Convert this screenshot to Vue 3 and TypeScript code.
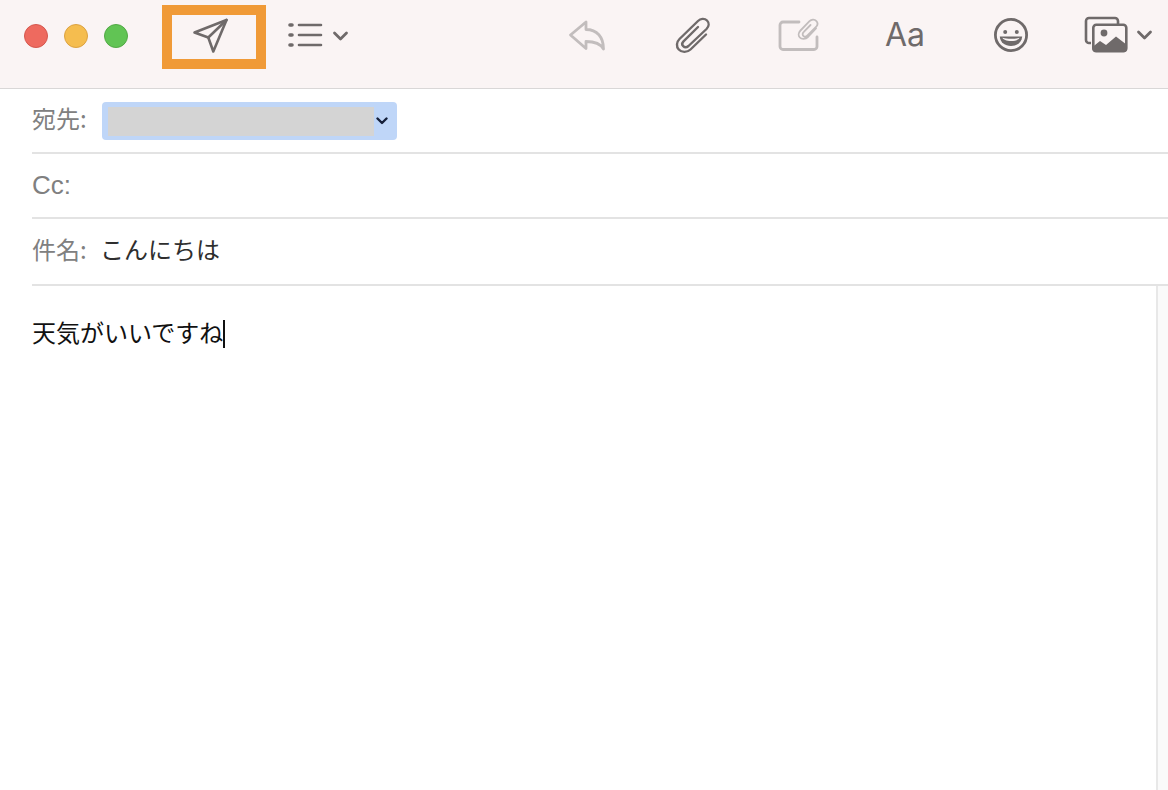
<script setup lang="ts">
const subject: string = 'こんにちは'
const body: string = '天気がいいですね'
</script>

<template>
  <div class="window">
    <header class="toolbar">
      <div class="lights">
        <span class="light red"></span>
        <span class="light yellow"></span>
        <span class="light green"></span>
      </div>
      <div class="send">
        <svg class="send-icon" width="40" height="40" viewBox="4 0 40 40" fill="none" stroke="#6f6a6a" stroke-width="2.6" stroke-linejoin="round" stroke-linecap="round">
          <path d="M36.5 3 L4.5 15.5 L18.3 20.5 L23.3 34.5 Z" />
          <path d="M36.5 3 L18.3 20.5" />
        </svg>
      </div>
      <div class="list">
        <svg width="62" height="30" viewBox="0 0 62 30" fill="none" stroke="#6f6a6a" stroke-linecap="round">
          <path d="M2 5 H4 M2 15 H4 M2 25 H4" stroke-width="3.6" />
          <path d="M11 5 H33 M11 15 H33 M11 25 H33" stroke-width="2.6" />
          <path d="M46.5 13 L52.5 19 L58.5 13" stroke-width="2.8" stroke-linejoin="round" />
        </svg>
      </div>
      <div class="tools">
        <div class="tool">
          <svg width="38" height="32" viewBox="0 0 38 32" fill="none" stroke="#c2bdbd" stroke-width="2.8" stroke-linejoin="round" stroke-linecap="round">
            <path d="M2.5 16 L18 3 V10.5 C29 10.5 35.5 18 35.5 30 C32.5 24.5 27 22.5 18 22.5 V29.5 Z" />
          </svg>
        </div>
        <div class="tool">
          <svg width="36" height="38" viewBox="0 0 36 38" fill="none" stroke="#6f6a6a" stroke-width="2.4" stroke-linecap="round" stroke-linejoin="round">
            <path d="M31 18.5 L15.5 33.5 C12 36.8 6.5 36.5 3.8 33.5 C1 30.5 1.5 26 4.5 23 L23 5 C25.5 2.5 29.5 2 32 4.5 C34.5 7 34 10.5 31.5 13 L13.5 30 C11.5 31.8 9.5 31.5 8.2 30.2 C6.8 28.8 7 26.8 8.5 25.3 L23 11" />
          </svg>
        </div>
        <div class="tool">
          <svg width="42" height="34" viewBox="0 0 42 34" fill="none" stroke="#c2bdbd" stroke-linecap="round" stroke-linejoin="round">
            <path d="M21 4 H5 A3 3 0 0 0 2 7 V28.5 A3 3 0 0 0 5 31.5 H36 A3 3 0 0 0 39 28.5 V19" stroke-width="2.8" />
            <path d="M38 10.5 L30 19 C27.5 21.5 23.5 21.5 21.8 19.5 C20 17.5 20.5 14.5 22.5 12.5 L31.5 3.2 C33.5 1.2 36.5 1 38.2 2.8 C40 4.6 39.8 7 38 9 L29.5 17.5 C28 19 26.3 18.8 25.3 17.8 C24.3 16.8 24.5 15 25.8 13.8 L32.5 7" stroke-width="1.8" />
          </svg>
        </div>
        <div class="tool"><span class="aa">Aa</span></div>
        <div class="tool">
          <svg width="36" height="36" viewBox="0 0 36 36" fill="none">
            <circle cx="18" cy="18" r="15.6" stroke="#6f6a6a" stroke-width="2.8" />
            <circle cx="12.2" cy="15" r="2" fill="#6f6a6a" />
            <circle cx="23.8" cy="15" r="2" fill="#6f6a6a" />
            <path d="M6.8 19.5 H29.2 C28.8 25.5 24 29 18 29 C12 29 7.2 25.5 6.8 19.5 Z" fill="#6f6a6a" />
            <path d="M9.5 20.8 C14 22.2 22 22.2 26.5 20.8 C26 22.5 22.5 24 18 24 C13.5 24 10 22.5 9.5 20.8 Z" fill="#faf4f4" />
          </svg>
        </div>
        <div class="tool photos">
          <svg width="70" height="38" viewBox="0 0 70 38" fill="none">
            <path d="M7 27 H5 A3 3 0 0 1 2 24 V5 A3 3 0 0 1 5 2 H31 A3 3 0 0 1 34 5 V8" stroke="#6f6a6a" stroke-width="2.6" stroke-linejoin="round" />
            <rect x="9.3" y="8.8" width="33" height="26.4" rx="3" stroke="#6f6a6a" stroke-width="2.6" />
            <circle cx="20" cy="17" r="3.4" fill="#6f6a6a" />
            <path d="M8.5 31 L16 25 L22 29 L32 20.5 L43 29 V33 A3 3 0 0 1 40 36 H11.5 A3 3 0 0 1 8.5 33 Z" fill="#6f6a6a" />
            <path d="M54.5 16 L60.5 22 L66.5 16" stroke="#6f6a6a" stroke-width="2.8" stroke-linecap="round" stroke-linejoin="round" />
          </svg>
        </div>
      </div>
    </header>

    <section class="fields">
      <div class="field first">
        <span class="label cjk">宛先:</span>
        <div class="chip">
          <span class="redacted"></span>
          <svg class="chip-arrow" width="12" height="8" viewBox="0 0 12 8" fill="none" stroke="#16203a" stroke-width="2.4" stroke-linecap="round" stroke-linejoin="round">
            <path d="M1.5 1.5 L6 6 L10.5 1.5" />
          </svg>
        </div>
      </div>
      <div class="field second">
        <span class="label latin">Cc:</span>
      </div>
      <div class="field third">
        <span class="label cjk">件名:</span>
        <span class="subject">{{ subject }}</span>
      </div>
    </section>

    <main class="compose">
      <div class="editor">
        <span class="body-text">{{ body }}</span><span class="caret"></span>
      </div>
      <div class="track"></div>
    </main>
  </div>
</template>

<style>
html, body { margin: 0; background: #fff; }
</style>

<style scoped>
.window {
  width: 1168px;
  height: 790px;
  display: flex;
  flex-direction: column;
  overflow: hidden;
  background: #fff;
  font-family: "Liberation Sans", "Noto Sans CJK JP", sans-serif;
}
.toolbar {
  height: 88px;
  flex: none;
  display: flex;
  align-items: flex-start;
  background: #faf4f4;
  border-bottom: 1px solid #d9d7d7;
  padding-left: 24px;
}
.lights {
  display: flex;
  gap: 16px;
  margin-top: 24px;
}
.light {
  width: 24px;
  height: 24px;
  border-radius: 50%;
  box-sizing: border-box;
  border: 1px solid;
}
.red { background: #ee6a5f; border-color: #d5574e; }
.yellow { background: #f5bd4f; border-color: #dca241; }
.green { background: #61c454; border-color: #52a945; }
.send {
  width: 104px;
  height: 64px;
  box-sizing: border-box;
  margin: 5px 0 0 34px;
  border: 10px solid #f09a37;
  display: flex;
  align-items: center;
  justify-content: center;
}
.send-icon { overflow: visible; }
.list {
  margin: 20px 0 0 22px;
  line-height: 0;
}
.tools {
  margin-left: auto;
  display: flex;
  height: 70px;
}
.tool {
  width: 106px;
  height: 70px;
  display: flex;
  align-items: center;
  justify-content: center;
}
.tool.photos {
  width: 104px;
  justify-content: flex-start;
  padding-left: 20px;
  box-sizing: border-box;
}
.aa {
  font-family: Inter, "Liberation Sans", sans-serif;
  font-size: 32px;
  line-height: 1;
  color: #6f6a6a;
}
.fields {
  flex: none;
  padding-left: 32px;
}
.field {
  border-bottom: 2px solid #e3e3e3;
  display: flex;
  align-items: center;
  font-family: "Noto Sans CJK JP", sans-serif;
}
.first { height: 63px; }
.second { height: 63px; }
.third { height: 65px; }
.label {
  font-size: 24px;
  color: #808080;
  width: 70px;
  flex: none;
  white-space: nowrap;
}
.label.cjk { margin-bottom: 6px; }
.label.latin {
  font-family: "Liberation Sans", sans-serif;
  font-size: 26px;
}
.chip {
  width: 295px;
  height: 38px;
  background: #bfd6f8;
  border-radius: 4px;
  display: flex;
  align-items: center;
  padding: 5px 9px 4px 6px;
  box-sizing: border-box;
}
.redacted {
  width: 266px;
  height: 29px;
  background: #d4d4d4;
}
.chip-arrow { margin-left: auto; }
.subject {
  font-size: 24px;
  color: #2e2e2e;
  margin: 0 0 6px -2px;
}
.compose {
  flex: 1;
  display: flex;
  min-height: 0;
}
.editor {
  flex: 1;
  padding: 28px 0 0 32px;
  display: flex;
  align-items: flex-start;
}
.body-text {
  font-family: "Noto Sans CJK JP", sans-serif;
  font-size: 24px;
  line-height: 36px;
  color: #111;
}
.caret {
  width: 2px;
  height: 28px;
  margin-top: 6px;
  background: #111;
}
.track {
  width: 10px;
  flex: none;
  background: #fafafa;
  border-left: 2px solid #e8e8e8;
}
</style>
